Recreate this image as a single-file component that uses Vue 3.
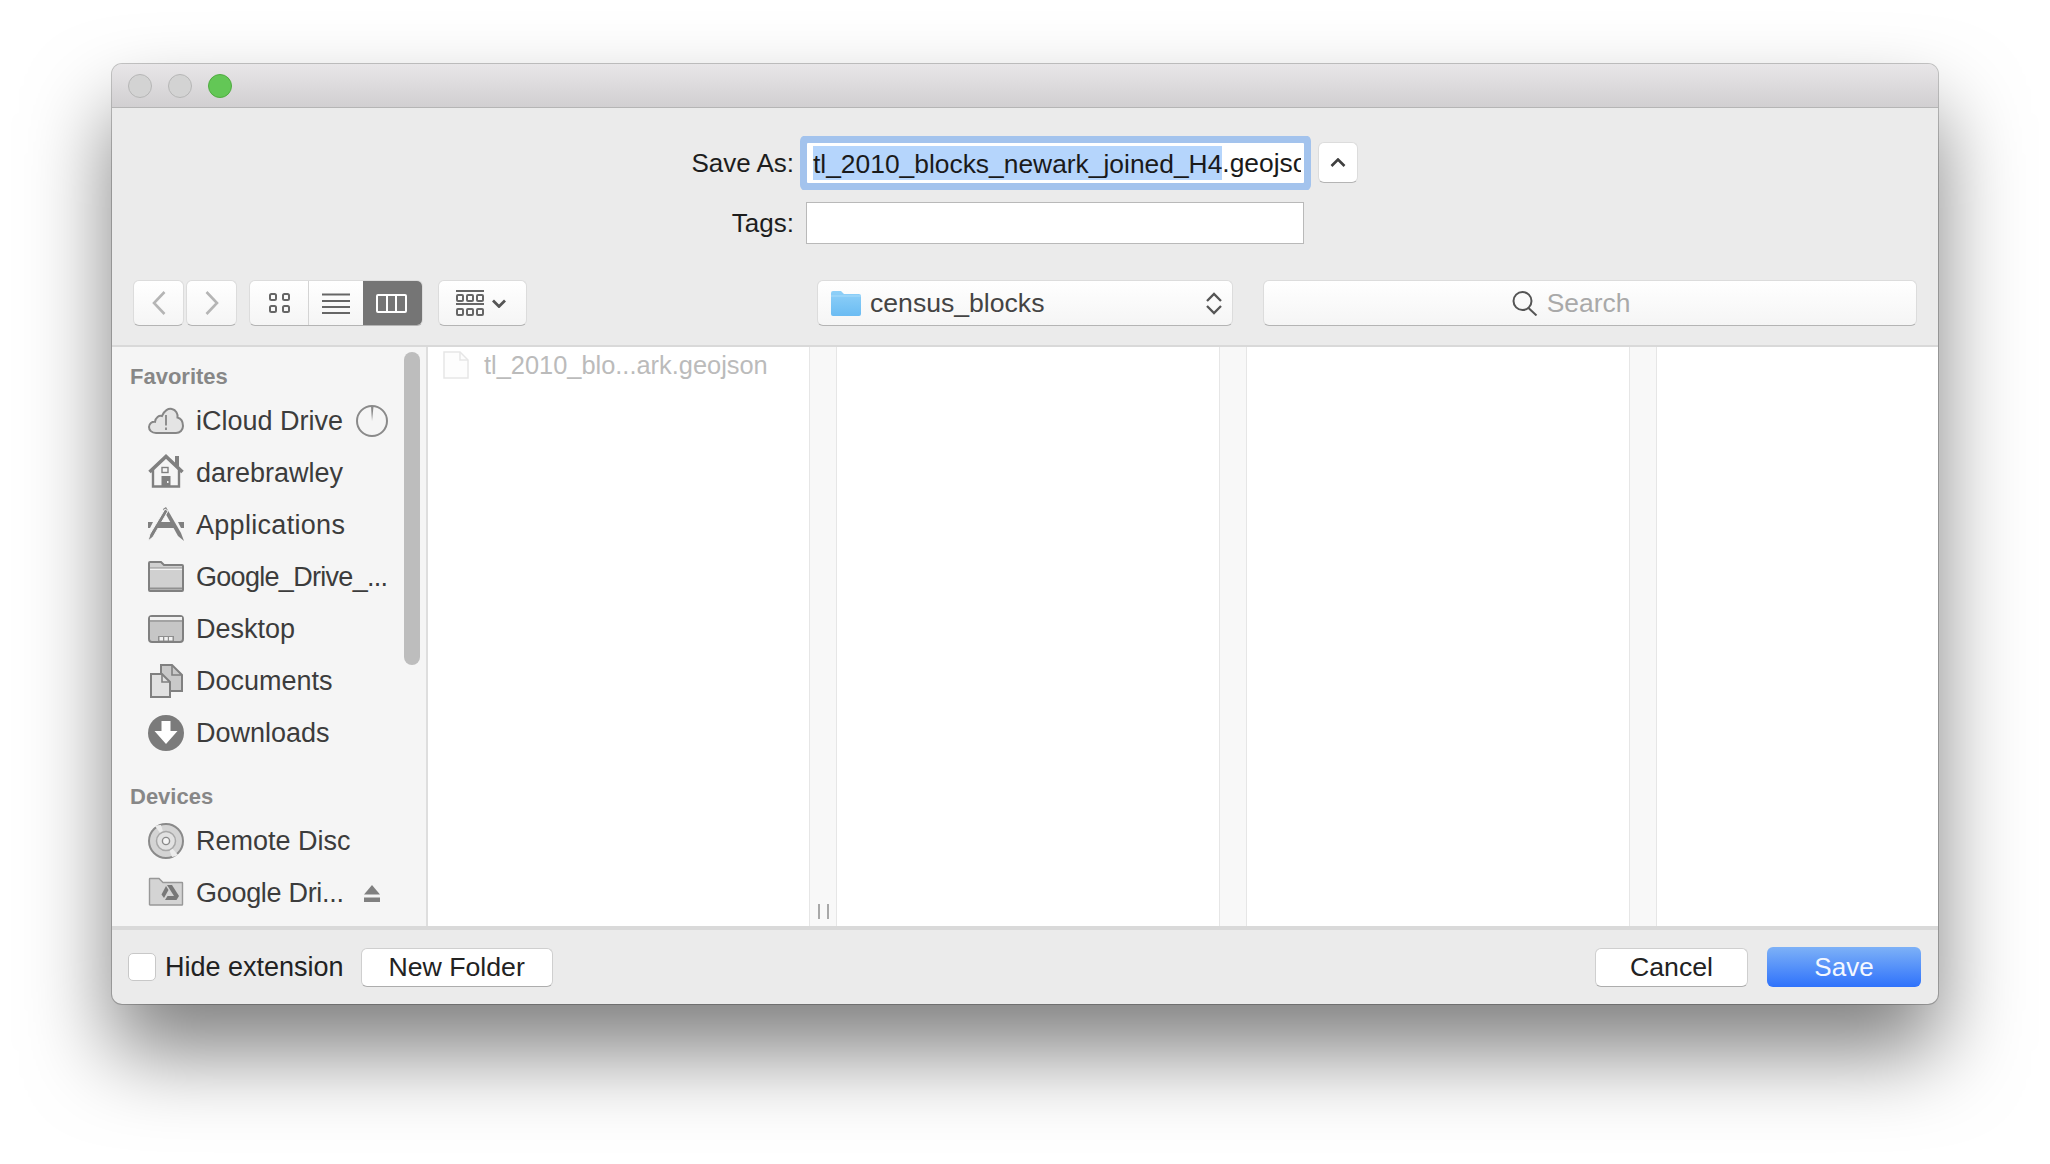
<script setup>
const columns = [381, 382, 382]
</script>

<template>
  <div class="stage">
    <div class="window">
      <div class="titlebar">
        <span class="light"></span>
        <span class="light"></span>
        <span class="light green"></span>
      </div>

      <div class="toolbar">
        <div class="form">
          <label class="label">Save As:</label>
          <div class="input focused"><span class="sel">tl_2010_blocks_newark_joined_H4</span><span class="ext">.geojson</span></div>
          <button class="btn expand">
            <svg width="16" height="9" viewBox="0 0 16 9"><path d="M1.5 8 L8 1.5 L14.5 8" fill="none" stroke="#3f3f3f" stroke-width="2.6"/></svg>
          </button>
          <label class="label">Tags:</label>
          <div class="input tags"></div>
        </div>

        <div class="nav">
          <button class="btn nav-btn">
            <svg width="14" height="24" viewBox="0 0 14 24"><path d="M12.5 1 L2 12 L12.5 23" fill="none" stroke="#b5b5b5" stroke-width="2.6"/></svg>
          </button>
          <button class="btn nav-btn">
            <svg width="14" height="24" viewBox="0 0 14 24"><path d="M1.5 1 L12 12 L1.5 23" fill="none" stroke="#b5b5b5" stroke-width="2.6"/></svg>
          </button>
          <div class="segment">
            <div class="seg seg-a">
              <svg width="21" height="20" viewBox="0 0 21 20" fill="none" stroke="#666" stroke-width="2">
                <rect x="1" y="1" width="6" height="6" rx="1.5"/><rect x="14" y="1" width="6" height="6" rx="1.5"/>
                <rect x="1" y="13" width="6" height="6" rx="1.5"/><rect x="14" y="13" width="6" height="6" rx="1.5"/>
              </svg>
            </div>
            <div class="seg seg-b">
              <svg width="28" height="21" viewBox="0 0 28 21" stroke="#666" stroke-width="2"><path d="M0 1.5H28M0 8H28M0 14H28M0 20H28"/></svg>
            </div>
            <div class="seg seg-c">
              <svg width="31" height="19" viewBox="0 0 31 19" fill="none" stroke="#fff" stroke-width="2"><rect x="1" y="1" width="29" height="17" rx="1"/><path d="M11 1V18M20 1V18"/></svg>
            </div>
          </div>
          <button class="btn arrange">
            <svg width="28" height="27" viewBox="0 0 28 27" fill="none" stroke="#666" stroke-width="2">
              <path d="M0 1H28M0 14H28"/>
              <rect x="1" y="5" width="6" height="6" rx="1"/><rect x="11" y="5" width="6" height="6" rx="1"/><rect x="21" y="5" width="6" height="6" rx="1"/>
              <rect x="1" y="19" width="6" height="6" rx="1"/><rect x="11" y="19" width="6" height="6" rx="1"/><rect x="21" y="19" width="6" height="6" rx="1"/>
            </svg>
            <svg width="14" height="9" viewBox="0 0 14 9"><path d="M1 1.5 L7 7.5 L13 1.5" fill="none" stroke="#555" stroke-width="2.8"/></svg>
          </button>
          <div class="btn path">
            <svg width="30" height="25" viewBox="0 0 30 25">
              <defs><linearGradient id="fold" x1="0" y1="0" x2="0" y2="1"><stop offset="0" stop-color="#8fd0f8"/><stop offset="1" stop-color="#6bbcf3"/></linearGradient></defs>
              <path d="M0 2 Q0 0 2 0 H10 L13 3 H28 Q30 3 30 5 V23 Q30 25 28 25 H2 Q0 25 0 23Z" fill="url(#fold)"/>
              <path d="M0 5 H30" stroke="#a9dcfa" stroke-width="1"/>
            </svg>
            <span class="path-name">census_blocks</span>
            <svg class="updown" width="16" height="23" viewBox="0 0 16 23" fill="none" stroke="#555" stroke-width="2.3"><path d="M1 9 L8 2 L15 9M1 14 L8 21 L15 14"/></svg>
          </div>
          <div class="btn search">
            <svg width="26" height="25" viewBox="0 0 26 25" fill="none" stroke="#555" stroke-width="2"><circle cx="10.5" cy="10" r="9"/><path d="M16.5 17 L24.5 24.5"/></svg>
            <span class="search-text">Search</span>
          </div>
        </div>
      </div>

      <div class="browser">
        <aside class="sidebar">
          <div class="heading">Favorites</div>

          <div class="row">
            <svg class="icon" width="36" height="36" viewBox="0 0 36 36">
              <path d="M8 30 C3.5 30 1 27 1 24 C1 20.5 4 18.5 7 18.8 C7.5 14.5 11 12 14 13 C16 7.5 20.5 5 24 6 C28 7 30 11 29.5 14.5 C33 15.5 35 19 35 23 C35 27 32 30 28 30 Z" fill="#e4e4e4" stroke="#868686" stroke-width="2"/>
              <path d="M18 12 V22.5M18 24.5 V27" stroke="#868686" stroke-width="1.8"/>
            </svg>
            <span class="name">iCloud Drive</span>
            <svg class="badge" width="32" height="32" viewBox="0 0 32 32"><circle cx="16" cy="16" r="15" fill="none" stroke="#8a8a8a" stroke-width="2"/><path d="M16 16 L15 1.5 H17.5Z" fill="#8a8a8a"/></svg>
          </div>
          <div class="row">
            <svg class="icon" width="36" height="36" viewBox="0 0 36 36">
              <path d="M5 14 V31.5 H31 V14" fill="none" stroke="#808080" stroke-width="2.4"/>
              <path d="M1.5 17 L18 1.5 L34.5 17" fill="none" stroke="#808080" stroke-width="3.6"/>
              <rect x="27" y="1" width="4" height="10" fill="#808080"/>
              <rect x="14" y="12.5" width="6" height="5" fill="none" stroke="#808080" stroke-width="1.4"/>
              <rect x="13.5" y="21" width="9" height="11" fill="#808080"/>
              <rect x="19" y="26" width="1.5" height="2" fill="#f5f5f5"/>
            </svg>
            <span class="name">darebrawley</span>
          </div>
          <div class="row">
            <svg class="icon" width="36" height="36" viewBox="0 0 36 36">
              <path d="M15 2 L18 0 L33 26 L36 34 L30 29Z" fill="#808080"/>
              <path d="M17 2 L20 4 L5 30 L0 34 L2 27Z" fill="#808080" stroke="#f5f5f5" stroke-width="1"/>
              <path d="M0 15 H5 L2 21 H0ZM11 15 H24 L27 21 H8ZM30 15 H36 V21 H33Z" fill="#808080"/>
            </svg>
            <span class="name wide">Applications</span>
          </div>
          <div class="row">
            <svg class="icon" width="36" height="36" viewBox="0 0 36 36">
              <path d="M1 4 Q1 3 2 3 H13 L16 6 H34 Q35 6 35 7 V31 Q35 32 34 32 H2 Q1 32 1 31Z" fill="#d0d0d0" stroke="#808080" stroke-width="2"/>
              <path d="M2 10 H34" stroke="#f3f3f3" stroke-width="2"/>
              <path d="M2 9 H34" stroke="#909090" stroke-width="1"/>
              <path d="M2 29.5 H34" stroke="#909090" stroke-width="2"/>
            </svg>
            <span class="name tight">Google_Drive_...</span>
          </div>
          <div class="row">
            <svg class="icon" width="36" height="36" viewBox="0 0 36 36">
              <rect x="1" y="5" width="34" height="26" rx="3" fill="#c6c6c6" stroke="#808080" stroke-width="2"/>
              <rect x="2" y="6" width="32" height="3" fill="#f1f1f1"/>
              <path d="M2 10 H34" stroke="#808080" stroke-width="1"/>
              <path d="M10 25 H26 V30 H10Z" fill="#8e8e8e"/>
              <rect x="11.5" y="26" width="3.5" height="3.5" fill="#f1f1f1"/><rect x="16.3" y="26" width="3.5" height="3.5" fill="#f1f1f1"/><rect x="21" y="26" width="3.5" height="3.5" fill="#f1f1f1"/>
            </svg>
            <span class="name">Desktop</span>
          </div>
          <div class="row">
            <svg class="icon" width="36" height="36" viewBox="0 0 36 36">
              <path d="M13 2 H24 L34 12 V28 H20 V20 L13 12Z" fill="#c9c9c9" stroke="#808080" stroke-width="2"/>
              <path d="M3 11 H14 L22 19 V34 H3Z" fill="#e1e1e1" stroke="#808080" stroke-width="2"/>
              <path d="M14 11 V19 H22" fill="none" stroke="#808080" stroke-width="1.6"/>
              <path d="M24 2 V12 H34" fill="none" stroke="#808080" stroke-width="1.6"/>
            </svg>
            <span class="name">Documents</span>
          </div>
          <div class="row">
            <svg class="icon" width="36" height="36" viewBox="0 0 36 36">
              <circle cx="18" cy="18" r="18" fill="#7b7b7b"/>
              <path d="M13.5 6 H22.5 V16 H29.5 L18 29 L6.5 16 H13.5Z" fill="#fff"/>
            </svg>
            <span class="name">Downloads</span>
          </div>

          <div class="heading devices">Devices</div>

          <div class="row">
            <svg class="icon" width="36" height="36" viewBox="0 0 36 36">
              <circle cx="18" cy="18" r="17" fill="#d4d4d4" stroke="#8a8a8a" stroke-width="2"/>
              <path d="M18 18 L7 3 A18 18 0 0 1 13 2Z M18 18 L30 32 A18 18 0 0 1 24 34Z" fill="#ececec"/>
              <circle cx="18" cy="18" r="9.5" fill="#e2e2e2" stroke="#a8a8a8" stroke-width="1.5"/>
              <circle cx="18" cy="18" r="3.6" fill="#f5f5f5" stroke="#8a8a8a" stroke-width="1.4"/>
            </svg>
            <span class="name">Remote Disc</span>
          </div>
          <div class="row">
            <svg class="icon" width="36" height="36" viewBox="0 0 36 36">
              <path d="M1.5 4 Q1.5 3.5 2 3.5 H11 L15 7.5 H34 Q34.5 7.5 34.5 8 V29.5 Q34.5 30 34 30 H2 Q1.5 30 1.5 29.5Z" fill="#d4d4d4" stroke="#989898" stroke-width="1.4"/>
              <path d="M19 10 H24 L31 21 H26Z" fill="#787878"/>
              <path d="M18 11 L20.5 15 L16 23 L13.5 19.5Z" fill="#787878"/>
              <path d="M17 25 L19.5 21 H31 L28.5 25Z" fill="#787878"/>
            </svg>
            <span class="name snug">Google Dri...</span>
            <svg class="badge eject" width="16" height="17" viewBox="0 0 16 17" fill="#808080"><path d="M8 0 L16 9.5 H0Z"/><rect y="12.5" width="16" height="4.5"/></svg>
          </div>

          <div class="scrollbar"></div>
        </aside>

        <div class="columns">
          <template v-for="(w, i) in columns" :key="i">
            <div class="col" :style="{ width: w + 'px' }">
              <div v-if="i === 0" class="file">
                <svg width="26" height="28" viewBox="0 0 26 28" fill="#fdfdfd" stroke="#e6e6e6" stroke-width="1.5"><path d="M1 1 H17 L25 9 V27 H1Z"/><path d="M17 1 V9 H25" fill="none"/></svg>
                <span>tl_2010_blo...ark.geojson</span>
              </div>
            </div>
            <div class="handle">
              <div v-if="i === 0" class="grip"><i></i><i></i></div>
            </div>
          </template>
          <div class="col last"></div>
        </div>
      </div>

      <div class="footer">
        <span class="check"></span>
        <span class="check-label">Hide extension</span>
        <button class="btn foot-btn new-folder">New Folder</button>
        <button class="btn foot-btn cancel">Cancel</button>
        <button class="btn foot-btn save">Save</button>
      </div>
    </div>
  </div>
</template>

<style>
html, body { margin: 0; background: #fff; }
</style>

<style scoped>
.stage {
  width: 2050px;
  height: 1164px;
  box-sizing: border-box;
  padding: 64px 0 0 112px;
  background: #fff;
  overflow: hidden;
  font-family: "Liberation Sans", Arial, sans-serif;
  font-size: 26px;
  color: #222;
}
.window {
  width: 1826px;
  height: 940px;
  display: flex;
  flex-direction: column;
  background: #ebebeb;
  border-radius: 10px;
  overflow: hidden;
  box-shadow: 0 0 0 1px rgba(0, 0, 0, 0.22), 0 48px 84px rgba(0, 0, 0, 0.5);
}
.titlebar {
  height: 43px;
  flex: none;
  display: flex;
  align-items: center;
  gap: 16px;
  padding-left: 16px;
  background: linear-gradient(#e8e6e8, #d1cfd1);
  border-bottom: 1px solid #b5b5b5;
}
.light {
  width: 24px;
  height: 24px;
  box-sizing: border-box;
  border-radius: 50%;
  background: #d3d3d3;
  border: 1px solid #b6b6b6;
}
.green { background: #63c756; border-color: #50ab40; }

.toolbar {
  height: 237px;
  flex: none;
  box-sizing: border-box;
  padding-top: 35px;
}
.form {
  display: grid;
  grid-template-columns: 682px 497px auto;
  grid-template-rows: 40px 42px;
  column-gap: 13px;
  row-gap: 19px;
  justify-content: start;
  align-items: center;
}
.label { text-align: right; color: #1d1d1d; }
.input {
  height: 100%;
  box-sizing: border-box;
  background: #fff;
  display: flex;
  align-items: center;
  white-space: nowrap;
  color: #1a1a1a;
}
.focused {
  padding-left: 6px;
  font-size: 26.4px;
  box-shadow: 0 0 0 7px #a3c3ed;
  border-radius: 1px;
  clip-path: inset(-8px -7px -8px -7px round 6px);
}
.ext { overflow: hidden; flex: none; width: 79px; }
.sel {
  background: #b5d5fc;
  height: 34px;
  line-height: 37px;
}
.tags { border: 1px solid #b9b9b9; grid-column: 2; margin-left: -1px; }
.btn {
  box-sizing: border-box;
  margin: 0;
  padding: 0;
  font: inherit;
  display: flex;
  align-items: center;
  justify-content: center;
  border: 1px solid #dcdcdc;
  border-bottom-color: #b4b4b4;
  border-radius: 6px;
  background: linear-gradient(#fff, #f5f5f5);
}
.expand {
  width: 40px;
  height: 41px;
  margin: 0 0 1px 1px;
  background: #fff;
}
.nav {
  display: flex;
  align-items: stretch;
  height: 46px;
  margin-top: 36px;
  padding-left: 21px;
}
.nav-btn { width: 51px; margin-right: 2px; }
.segment {
  width: 174px;
  margin-left: 10px;
  display: flex;
  border-radius: 6px;
  overflow: hidden;
  box-sizing: border-box;
  border: 1px solid #dcdcdc;
  border-bottom-color: #b4b4b4;
  background: linear-gradient(#fff, #f5f5f5);
}
.seg { display: flex; align-items: center; justify-content: center; }
.seg-a { width: 58px; border-right: 1px solid #d4d4d4; }
.seg-b { width: 54px; }
.seg-c { flex: 1; background: #757575; margin: -1px -1px -1px 0; padding-right: 3px; }
.arrange {
  width: 89px;
  margin-left: 15px;
  gap: 8px;
  justify-content: flex-start;
  padding-left: 17px;
}
.path {
  width: 416px;
  margin-left: 290px;
  justify-content: flex-start;
  padding-left: 13px;
  color: #444;
  font-size: 26.6px;
}
.path-name { margin-left: 9px; }
.updown { margin-left: auto; margin-right: 10px; }
.search {
  width: 654px;
  margin-left: 30px;
  gap: 9px;
  padding-right: 38px;
  color: #aaa;
  font-size: 26.4px;
}
.search-text { color: #a9a9a9; }

.browser {
  flex: 1;
  min-height: 0;
  display: flex;
  border-top: 2px solid #d9d9d9;
  border-bottom: 4px solid #d9d9d9;
  background: #fff;
}
.sidebar {
  position: relative;
  width: 316px;
  flex: none;
  box-sizing: border-box;
  padding-top: 15px;
  background: #f5f5f5;
  border-right: 2px solid #dedede;
  overflow: hidden;
}
.heading {
  height: 30px;
  line-height: 30px;
  margin: 0 0 3px 18px;
  font-size: 22px;
  font-weight: 700;
  color: #878787;
}
.devices { margin-top: 23px; margin-bottom: 3px; }
.row {
  height: 52px;
  display: flex;
  align-items: center;
  padding: 0 38px 0 36px;
  color: #3c3c3c;
  font-size: 27px;
}
.icon { flex: none; overflow: visible; margin-right: 12px; }
.name { white-space: nowrap; }
.tight { letter-spacing: -0.7px; }
.snug { letter-spacing: -0.3px; }
.wide { letter-spacing: 0.3px; }
.badge { margin-left: auto; flex: none; }
.eject { margin-right: 8px; }
.scrollbar {
  position: absolute;
  left: 292px;
  top: 5px;
  width: 16px;
  height: 313px;
  border-radius: 8px;
  background: #bdbdbd;
}
.columns { flex: 1; display: flex; min-width: 0; }
.col { flex: none; box-sizing: border-box; }
.last { flex: 1; }
.handle {
  width: 28px;
  flex: none;
  box-sizing: border-box;
  background: #f8f8f8;
  border-left: 1px solid #e6e6e6;
  border-right: 1px solid #e6e6e6;
  display: flex;
  align-items: flex-end;
  justify-content: center;
  padding-bottom: 7px;
}
.grip { display: flex; gap: 7px; }
.grip i { display: block; width: 2px; height: 15px; background: #a8a8a8; }
.file {
  height: 36px;
  display: flex;
  align-items: center;
  gap: 15px;
  padding-left: 15px;
  font-size: 25.4px;
  color: #bbb;
}
.footer {
  height: 74px;
  flex: none;
  display: flex;
  align-items: center;
  padding: 0 17px 0 16px;
}
.check {
  width: 28px;
  height: 28px;
  box-sizing: border-box;
  background: #fff;
  border: 1px solid #c8c8c8;
  border-radius: 5px;
}
.check-label { margin-left: 9px; color: #222; font-size: 27px; }
.foot-btn {
  height: 39px;
  background: #fff;
  color: #222;
  border: 1px solid #cfcfcf;
  border-bottom-color: #adadad;
  font-size: 26.7px;
}
.new-folder { width: 192px; margin-left: 17px; }
.cancel { width: 153px; margin-left: auto; }
.save {
  width: 154px;
  height: 40px;
  margin-left: 19px;
  border: none;
  color: #f4f8ff;
  font-size: 26px;
  background: linear-gradient(#7db1f7, #2f72fb);
}
</style>
